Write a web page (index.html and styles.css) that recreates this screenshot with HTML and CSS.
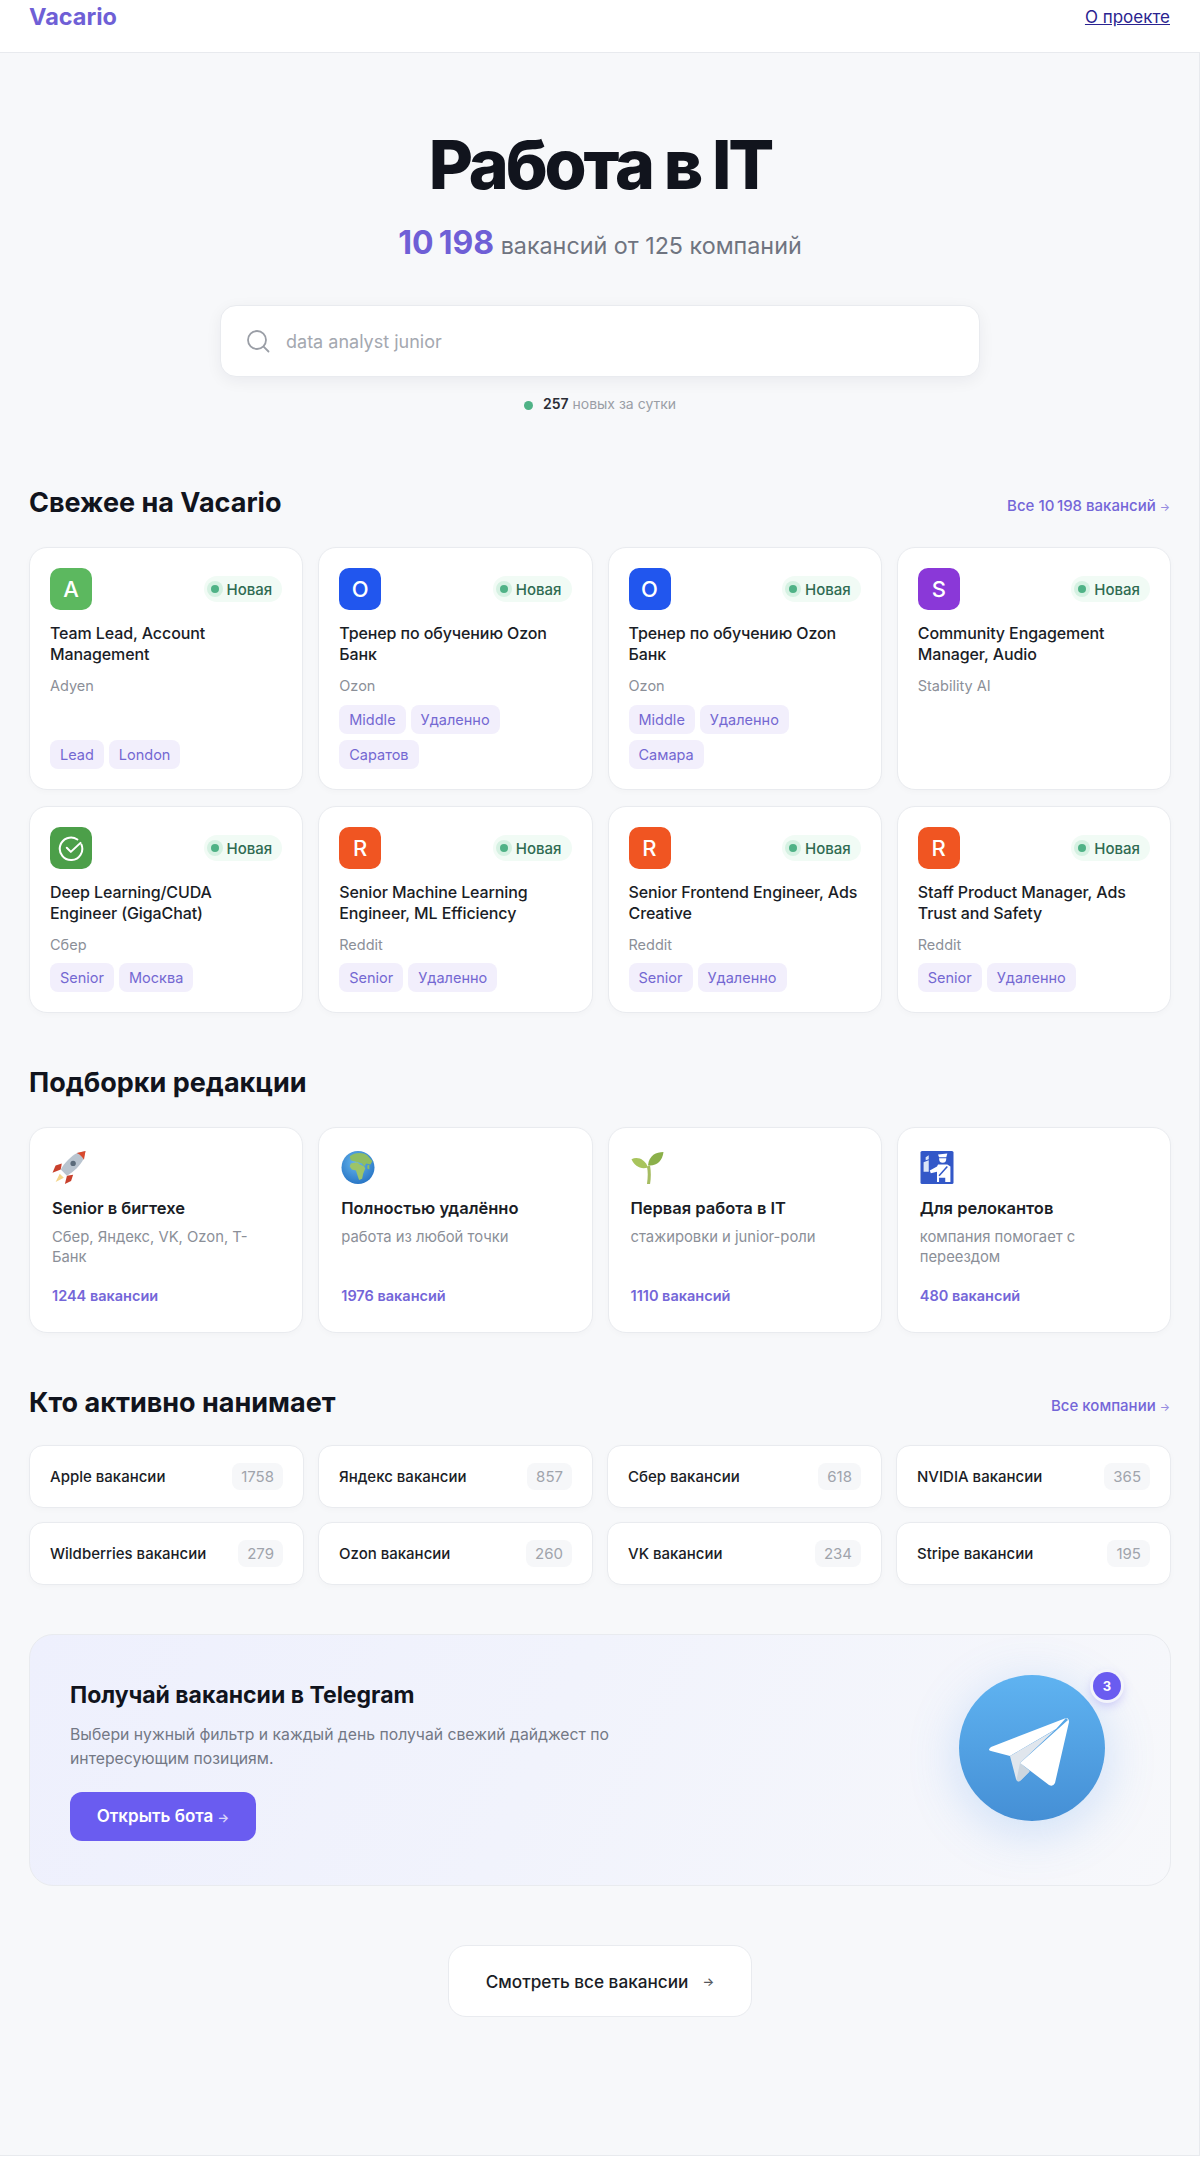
FILE: index.html
```html
<!DOCTYPE html>
<html lang="ru">
<head>
    <meta charset="UTF-8">
    <meta name="viewport" content="width=device-width, initial-scale=1.0">
    <title>Vacario — Работа в IT</title>
    <link rel="stylesheet" href="styles.css">
</head>
<body>
    <header class="site-header">
        <a class="logo" href="#">Vacario</a>
        <a class="about-link" href="#">О проекте</a>
    </header>

    <main class="page">
        <section class="hero">
            <h1>Работа в IT</h1>
            <p class="hero-sub"><strong>10&#8201;198</strong> вакансий от 125 компаний</p>
            <div class="search-box">
                <svg class="search-icon" viewBox="0 0 24 24" fill="none" stroke="#9a9ea6" stroke-width="1.8" stroke-linecap="round">
                    <circle cx="11" cy="11" r="9"></circle>
                    <path d="M17.6 17.6 22.5 22.5"></path>
                </svg>
                <span class="search-placeholder">data analyst junior</span>
            </div>
            <p class="hero-stat"><span class="stat-dot"></span><b>257</b> новых за сутки</p>
        </section>

        <section class="fresh">
            <div class="section-head">
                <h2>Свежее на Vacario</h2>
                <a class="more-link" href="#">Все 10&#8201;198 вакансий <span class="arrow">→</span></a>
            </div>
            <div class="job-grid">
                <article class="job-card">
                    <div class="job-top">
                        <div class="job-logo logo-adyen">A</div>
                        <span class="badge-new"><i></i>Новая</span>
                    </div>
                    <h3>Team Lead, Account Management</h3>
                    <p class="company">Adyen</p>
                    <div class="tags"><span>Lead</span><span>London</span></div>
                </article>
                <article class="job-card">
                    <div class="job-top">
                        <div class="job-logo logo-ozon">O</div>
                        <span class="badge-new"><i></i>Новая</span>
                    </div>
                    <h3>Тренер по обучению Ozon Банк</h3>
                    <p class="company">Ozon</p>
                    <div class="tags"><span>Middle</span><span>Удаленно</span><span>Саратов</span></div>
                </article>
                <article class="job-card">
                    <div class="job-top">
                        <div class="job-logo logo-ozon">O</div>
                        <span class="badge-new"><i></i>Новая</span>
                    </div>
                    <h3>Тренер по обучению Ozon Банк</h3>
                    <p class="company">Ozon</p>
                    <div class="tags"><span>Middle</span><span>Удаленно</span><span>Самара</span></div>
                </article>
                <article class="job-card">
                    <div class="job-top">
                        <div class="job-logo logo-stability">S</div>
                        <span class="badge-new"><i></i>Новая</span>
                    </div>
                    <h3>Community Engagement Manager, Audio</h3>
                    <p class="company">Stability AI</p>
                </article>
                <article class="job-card">
                    <div class="job-top">
                        <div class="job-logo logo-sber">
                            <svg viewBox="0 0 24 24" width="27" height="27" fill="none" stroke="#fff" stroke-width="1.800" stroke-linecap="round" stroke-linejoin="round">
                                <path d="M20.800 8.400A10 10 0 1 1 17.200 4"></path>
                                <path d="M7.800 11.400 11.400 15 20 7"></path>
                            </svg>
                        </div>
                        <span class="badge-new"><i></i>Новая</span>
                    </div>
                    <h3>Deep Learning/CUDA Engineer (GigaChat)</h3>
                    <p class="company">Сбер</p>
                    <div class="tags"><span>Senior</span><span>Москва</span></div>
                </article>
                <article class="job-card">
                    <div class="job-top">
                        <div class="job-logo logo-reddit">R</div>
                        <span class="badge-new"><i></i>Новая</span>
                    </div>
                    <h3>Senior Machine Learning Engineer, ML Efficiency</h3>
                    <p class="company">Reddit</p>
                    <div class="tags"><span>Senior</span><span>Удаленно</span></div>
                </article>
                <article class="job-card">
                    <div class="job-top">
                        <div class="job-logo logo-reddit">R</div>
                        <span class="badge-new"><i></i>Новая</span>
                    </div>
                    <h3>Senior Frontend Engineer, Ads Creative</h3>
                    <p class="company">Reddit</p>
                    <div class="tags"><span>Senior</span><span>Удаленно</span></div>
                </article>
                <article class="job-card">
                    <div class="job-top">
                        <div class="job-logo logo-reddit">R</div>
                        <span class="badge-new"><i></i>Новая</span>
                    </div>
                    <h3>Staff Product Manager, Ads Trust and Safety</h3>
                    <p class="company">Reddit</p>
                    <div class="tags"><span>Senior</span><span>Удаленно</span></div>
                </article>
            </div>
        </section>

        <section class="picks">
            <div class="section-head">
                <h2>Подборки редакции</h2>
            </div>
            <div class="pick-grid">
                <article class="pick-card">
                    <svg class="pick-icon" viewBox="0 0 32 32">
                        <path d="M3 30 7 22 11 26Z" fill="#f4d58a"></path>
                        <path d="M9 12 3 14 0 21 8 18Z" fill="#c8402c"></path>
                        <path d="M20 23 18 29 12 32 14 24Z" fill="#c8402c"></path>
                        <path d="M24 2 C18 5 12 11 8 18 L14 24 C21 20 27 14 30 8 L32 0Z" fill="#b9c4cf"></path>
                        <path d="M23.500 2 32 0 30.500 8.500C29 6 27 3.500 23.500 2Z" fill="#d9492e"></path>
                        <circle cx="20" cy="12" r="2.600" fill="#5b6b7a"></circle>
                    </svg>
                    <h3>Senior в бигтехе</h3>
                    <p class="pick-desc">Сбер, Яндекс, VK, Ozon, Т-Банк</p>
                    <p class="pick-count">1244 вакансии</p>
                </article>
                <article class="pick-card">
                    <svg class="pick-icon" viewBox="0 0 32 32">
                        <defs>
                            <radialGradient id="globe-sea" cx="0.45" cy="0.35" r="0.75">
                                <stop offset="0" stop-color="#69b9ee"></stop>
                                <stop offset="1" stop-color="#1f6cc0"></stop>
                            </radialGradient>
                        </defs>
                        <ellipse cx="16" cy="16" rx="16" ry="16" fill="url(#globe-sea)"></ellipse>
                        <path d="M8 5C12 1.500 20 .5 25 4L30 10 28 13 24 12 22 15 20 12 16 11 12 10 9 9Z" fill="#8fbd62"></path>
                        <path d="M9 12 15 11 18 13 22 15 23 17 21 22 20 27 17 28 15 22 14 19 10 18 8 15Z" fill="#9cc468"></path>
                        <path d="M25 14 27 13 27 18 25 17Z" fill="#8fbd62"></path>
                    </svg>
                    <h3>Полностью удалённо</h3>
                    <p class="pick-desc">работа из любой точки</p>
                    <p class="pick-count">1976 вакансий</p>
                </article>
                <article class="pick-card">
                    <svg class="pick-icon" viewBox="0 0 32 32">
                        <path d="M15 32 C16 25 16 20 15 15 L18 14 C19 20 19 26 18 32Z" fill="#a6bc62"></path>
                        <path d="M0 8 C6 5 13 8 16 16 C9 18 3 15 0 8Z" fill="#a8c45c"></path>
                        <path d="M31 1 C24 1 17 4 16 14 C24 15 30 10 31 1Z" fill="#8bb04a"></path>
                    </svg>
                    <h3>Первая работа в IT</h3>
                    <p class="pick-desc">стажировки и junior-роли</p>
                    <p class="pick-count">1110 вакансий</p>
                </article>
                <article class="pick-card">
                    <svg class="pick-icon" viewBox="0 0 32 32">
                        <rect width="32" height="32" rx="1.500" fill="#3358c8"></rect>
                        <path d="M3 11 8 9V20H3Z" fill="#dbe6f8"></path>
                        <path d="M5 6 8 4V8L5 9Z" fill="#dbe6f8"></path>
                        <path d="M17 3.500 26 2.500 25 6H18Z" fill="#fff"></path>
                        <path d="M18 7H25C25 10 24 11.500 21.500 11.500S18 10 18 7Z" fill="#fff"></path>
                        <path d="M17 13H26L29 15V30H24V26H18V30H16V20L10 21.500 9 19 16 15Z" fill="#fff"></path>
                        <path d="M26 15 18 24" stroke="#3358c8" stroke-width="1.500"></path>
                    </svg>
                    <h3>Для релокантов</h3>
                    <p class="pick-desc">компания помогает с переездом</p>
                    <p class="pick-count">480 вакансий</p>
                </article>
            </div>
        </section>

        <section class="hiring">
            <div class="section-head">
                <h2>Кто активно нанимает</h2>
                <a class="more-link" href="#">Все компании <span class="arrow">→</span></a>
            </div>
            <div class="company-grid">
                <a class="company-chip" href="#">Apple вакансии<span>1758</span></a>
                <a class="company-chip" href="#">Яндекс вакансии<span>857</span></a>
                <a class="company-chip" href="#">Сбер вакансии<span>618</span></a>
                <a class="company-chip" href="#">NVIDIA вакансии<span>365</span></a>
                <a class="company-chip" href="#">Wildberries вакансии<span>279</span></a>
                <a class="company-chip" href="#">Ozon вакансии<span>260</span></a>
                <a class="company-chip" href="#">VK вакансии<span>234</span></a>
                <a class="company-chip" href="#">Stripe вакансии<span>195</span></a>
            </div>
        </section>

        <section class="tg-banner">
            <div class="tg-text">
                <h2>Получай вакансии в Telegram</h2>
                <p>Выбери нужный фильтр и каждый день получай свежий дайджест по интересующим позициям.</p>
                <a class="tg-button" href="#">Открыть бота <span class="arrow">→</span></a>
            </div>
            <div class="tg-icon">
                <svg viewBox="-73 -73 146 146" width="146" height="146">
                    <path d="M34-30-41-1Q-45 2-41 3L-22 8 24-19Z" fill="#fff"></path>
                    <path d="M-22 8-16 31Q-14 35-11 32L-3 24-12 15 23-18Z" fill="#e0e6ed"></path>
                    <path d="M-15.500 32-12 15-2 23-11 32Q-14 35-15.500 32Z" fill="#ccd6df"></path>
                    <path d="M36-28-12 15 17 37Q21 39 23 35L37-26Q37-30 34-30Z" fill="#fff"></path>
                </svg>
                <span class="tg-count">3</span>
            </div>
        </section>

        <div class="all-jobs">
            <a class="all-jobs-button" href="#">Смотреть все вакансии <span class="arrow">→</span></a>
        </div>
    </main>

    <footer class="site-footer"></footer>
</body>
</html>
```

FILE: styles.css
```css
* {
    box-sizing: border-box;
}

body {
    font-family: Inter, "Noto Sans", sans-serif;
    background-color: #ffffff;
    color: #11141d;
    margin: 0;
}

h1, h2, h3, p {
    margin: 0;
}

.site-header {
    height: 53px;
    padding: 3px 30px 0 29px;
    background: #fff;
    border-bottom: 1px solid #e8eaee;
    display: flex;
    justify-content: space-between;
    align-items: flex-start;
}

.logo {
    color: #6f5fd6;
    font-size: 23.5px;
    line-height: 28px;
    font-weight: 700;
    text-decoration: none;
}

.about-link {
    color: #2a2390;
    font-size: 17px;
    line-height: 28px;
}

.page {
    height: 2102px;
    padding: 0 28px 0 29px;
    background: #f7f8fa;
    border-right: 1px solid #e8eaee;
}

.hero {
    padding-top: 69px;
    text-align: center;
}

h1 {
    font-size: 68px;
    line-height: 84px;
    font-weight: 800;
    letter-spacing: -3.1px;
}

.hero-sub {
    margin-top: 21px;
    height: 36px;
    font-size: 23.3px;
    line-height: 36px;
    color: #6f7480;
}

.hero-sub strong {
    color: #6f5fd6;
    font-size: 32px;
    line-height: 1;
    font-weight: 700;
}

.search-box {
    width: 760px;
    height: 72px;
    margin: 42px auto 0;
    padding: 0 25px;
    background: #fff;
    border: 1px solid #e9ebef;
    border-radius: 16px;
    box-shadow: 0 4px 16px rgba(20, 25, 50, 0.06);
    display: flex;
    align-items: center;
    gap: 16px;
}

.search-icon {
    width: 24px;
    height: 24px;
}

.search-placeholder {
    font-size: 18px;
    color: #a4a8b0;
}

.hero-stat {
    margin-top: 17px;
    font-size: 14px;
    line-height: 20px;
    color: #9a9ea6;
}

.hero-stat b {
    color: #2a2d36;
    font-weight: 600;
}

.stat-dot {
    display: inline-block;
    width: 9px;
    height: 9px;
    margin-right: 10px;
    border-radius: 50%;
    background: #4fb286;
    vertical-align: -1px;
}

.section-head {
    display: flex;
    justify-content: space-between;
    align-items: flex-end;
}

.section-head h2 {
    font-size: 27px;
    line-height: 36px;
    font-weight: 700;
}

.more-link {
    color: #7466d8;
    font-size: 15px;
    line-height: 20px;
    font-weight: 500;
    text-decoration: none;
    margin-right: 1px;
    padding-bottom: 3px;
}

.arrow {
    font-size: 0.72em;
    color: inherit;
    opacity: 0.75;
}

.fresh {
    margin-top: 71px;
}

.job-grid {
    margin-top: 26px;
    display: grid;
    grid-template-columns: repeat(4, 1fr);
    grid-template-rows: 243px 207px;
    gap: 16px 15px;
}

.job-card {
    padding: 20px;
    background: #fff;
    border: 1px solid #e9ebef;
    border-radius: 18px;
    box-shadow: 0 2px 6px rgba(20, 25, 50, 0.025);
    display: flex;
    flex-direction: column;
}

.job-top {
    display: flex;
    justify-content: space-between;
    align-items: center;
}

.job-logo {
    width: 42px;
    height: 42px;
    border-radius: 10px;
    color: #fff;
    font-size: 22px;
    font-weight: 500;
    display: flex;
    align-items: center;
    justify-content: center;
}

.logo-adyen { background: #5cb85f; }
.logo-ozon { background: #2156ee; }
.logo-stability { background: #8a38d8; }
.logo-sber { background: #4c9f49; }
.logo-reddit { background: #f05522; }

.badge-new {
    height: 26px;
    padding: 0 10px 0 3px;
    background: #f1fbf5;
    border-radius: 13px;
    color: #2f6b52;
    font-size: 15px;
    font-weight: 500;
    display: flex;
    align-items: center;
    gap: 4px;
}

.badge-new i {
    width: 8px;
    height: 8px;
    margin: 0 4px;
    border-radius: 50%;
    background: #4fb286;
    box-shadow: 0 0 0 4px #d5f1e2;
}

.job-card h3 {
    margin-top: 12.5px;
    font-size: 16px;
    line-height: 21px;
    font-weight: 500;
    letter-spacing: -0.1px;
    color: #1a1d26;
}

.company {
    margin-top: 11px;
    font-size: 14.5px;
    line-height: 20px;
    color: #8b8f98;
}

.tags {
    margin-top: auto;
    display: flex;
    flex-wrap: wrap;
    gap: 6px 5px;
}

.tags span {
    height: 29px;
    padding: 0 10px;
    background: #f2effc;
    border-radius: 8px;
    color: #7468d2;
    font-size: 14.5px;
    line-height: 29px;
}

.picks {
    margin-top: 52px;
}

.pick-grid {
    margin-top: 26px;
    display: grid;
    grid-template-columns: repeat(4, 1fr);
    gap: 16px 15px;
}

.pick-card {
    height: 206px;
    padding: 23px 22px;
    background: #fff;
    border: 1px solid #e9ebef;
    border-radius: 18px;
    box-shadow: 0 2px 6px rgba(20, 25, 50, 0.025);
    display: flex;
    flex-direction: column;
}

.pick-icon {
    width: 34px;
    height: 33px;
    flex: none;
}

.pick-card h3 {
    margin-top: 12px;
    font-size: 16.5px;
    line-height: 24px;
    font-weight: 600;
    color: #1a1d26;
}

.pick-desc {
    margin-top: 7px;
    font-size: 14.8px;
    line-height: 20px;
    color: #8b8f98;
}

.pick-count {
    margin-top: auto;
    padding-bottom: 3px;
    color: #7466d8;
    font-size: 14.5px;
    line-height: 20px;
    font-weight: 600;
}

.hiring {
    margin-top: 52px;
}

.company-grid {
    margin-top: 24px;
    display: grid;
    grid-template-columns: repeat(4, 1fr);
    gap: 14px;
}

.company-chip {
    height: 63px;
    padding: 0 20px;
    background: #fff;
    border: 1px solid #e9ebef;
    border-radius: 14px;
    box-shadow: 0 2px 6px rgba(20, 25, 50, 0.025);
    color: #1a1d26;
    font-size: 15px;
    font-weight: 500;
    text-decoration: none;
    display: flex;
    justify-content: space-between;
    align-items: center;
}

.company-chip span {
    padding: 4px 9px;
    background: #f6f7f9;
    border-radius: 8px;
    color: #a0a4ac;
    font-weight: 400;
}

.tg-banner {
    margin-top: 49px;
    height: 252px;
    padding: 0 65px 0 40px;
    border: 1px solid #e9ebef;
    border-radius: 24px;
    background: linear-gradient(115deg, #eef0fd 0%, #f1f3fc 45%, #f7f8fb 100%);
    display: flex;
    justify-content: space-between;
    align-items: center;
}

.tg-text {
    width: 560px;
}

.tg-text h2 {
    font-size: 23px;
    line-height: 32px;
    font-weight: 700;
}

.tg-text p {
    margin-top: 12px;
    font-size: 15.75px;
    line-height: 24px;
    color: #737885;
}

.tg-button {
    margin-top: 21px;
    display: inline-block;
    width: 186px;
    height: 49px;
    background: #6a5cf0;
    border-radius: 12px;
    color: #fff;
    font-size: 17px;
    line-height: 49px;
    font-weight: 600;
    text-align: center;
    text-decoration: none;
}

.tg-icon {
    position: relative;
    width: 146px;
    height: 146px;
    margin-bottom: 24px;
    border-radius: 50%;
    background: linear-gradient(180deg, #5fb3f1 0%, #458fd5 100%);
    box-shadow: 0 10px 50px rgba(80, 150, 240, 0.25);
}

.tg-icon svg {
    display: block;
}

.tg-count {
    position: absolute;
    top: -3px;
    right: -16px;
    width: 28px;
    height: 28px;
    border-radius: 50%;
    background: #6a5cf0;
    box-shadow: 0 0 0 3px #f3f4fb, 0 4px 12px rgba(106, 92, 240, 0.4);
    color: #fff;
    font-size: 13px;
    line-height: 28px;
    font-weight: 700;
    text-align: center;
}

.all-jobs {
    margin-top: 59px;
    display: flex;
    justify-content: center;
}

.all-jobs-button {
    width: 304px;
    height: 72px;
    background: #fff;
    border: 1px solid #e9ebef;
    border-radius: 18px;
    color: #1a1d26;
    font-size: 17.2px;
    font-weight: 500;
    text-decoration: none;
    display: flex;
    align-items: center;
    justify-content: center;
    gap: 14px;
}

.site-footer {
    height: 12px;
    background: #fff;
    border-top: 1px solid #e8eaee;
}
```
